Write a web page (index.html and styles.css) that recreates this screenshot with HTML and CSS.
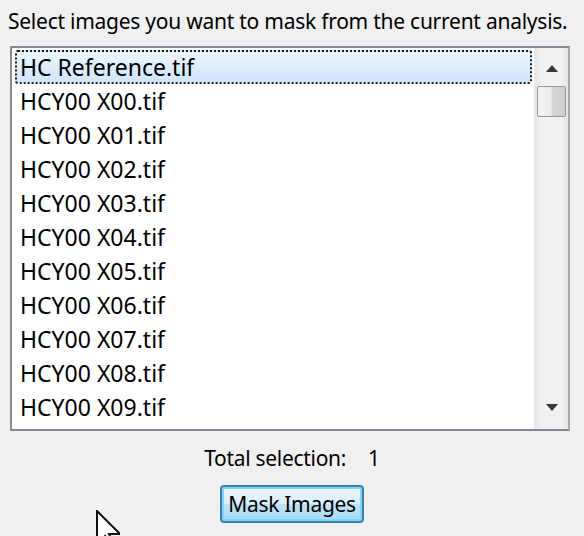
FILE: index.html
```html
<!DOCTYPE html>
<html>
<head>
<meta charset="utf-8">
<link rel="stylesheet" href="styles.css">
</head>
<body>
<div class="dialog">
  <div class="prompt">Select images you want to mask from the current analysis.</div>
  <div class="listbox">
    <div class="items">
      <div class="item selected">HC Reference.tif</div>
      <div class="item">HCY00 X00.tif</div>
      <div class="item">HCY00 X01.tif</div>
      <div class="item">HCY00 X02.tif</div>
      <div class="item">HCY00 X03.tif</div>
      <div class="item">HCY00 X04.tif</div>
      <div class="item">HCY00 X05.tif</div>
      <div class="item">HCY00 X06.tif</div>
      <div class="item">HCY00 X07.tif</div>
      <div class="item">HCY00 X08.tif</div>
      <div class="item">HCY00 X09.tif</div>
    </div>
    <div class="scrollbar">
      <div class="arrow up"><svg width="12" height="7" viewBox="0 0 12 7"><path d="M6 0 L12 7 L0 7 Z" fill="#3a3a3a"/></svg></div>
      <div class="thumb"></div>
      <div class="track"></div>
      <div class="arrow down"><svg width="12" height="7" viewBox="0 0 12 7"><path d="M0 0 L12 0 L6 7 Z" fill="#3a3a3a"/></svg></div>
    </div>
  </div>
  <div class="total">Total selection:<span class="count">1</span></div>
  <div class="actions"><button class="btn">Mask Images</button></div>
</div>
<svg class="cursor" width="24" height="36" viewBox="0 0 24 36"><path d="M1 1 L1 34 L9 26 L14 36 L18 34 L13 24 L24 24 Z" fill="#fff" stroke="#111" stroke-width="2"/></svg>
</body>
</html>
```
FILE: styles.css
```css
html, body {
  margin: 0;
  padding: 0;
  background: #f0f0f0;
  width: 584px;
  height: 536px;
  overflow: hidden;
  position: relative;
}
.dialog {
  font-family: "Noto Sans", sans-serif;
  color: #000;
}
.prompt {
  font-size: 21px;
  letter-spacing: -0.25px;
  padding: 8px 0 0 8px;
  height: 46px;
  box-sizing: border-box;
  line-height: 26px;
  white-space: nowrap;
}
.listbox {
  margin-left: 10px;
  width: 560px;
  height: 385px;
  box-sizing: border-box;
  border: 2px solid #868991;
  border-right-color: #a4a7ad;
  background: #fff;
  display: flex;
}
.items {
  flex: 1;
  padding: 2px 2px 0 3px;
  overflow: hidden;
}
.item {
  height: 34px;
  line-height: 34px;
  font-size: 23px;
  letter-spacing: 0;
  padding-left: 5px;
  box-sizing: border-box;
  white-space: nowrap;
}
.item.selected {
  border: 2px dotted #1a1a1a;
  border-radius: 3px;
  background: linear-gradient(#eef6fe, #cfe4fb);
  line-height: 30px;
  padding-left: 3px;
}
.scrollbar {
  width: 33px;
  display: flex;
  flex-direction: column;
  background: linear-gradient(90deg, #e6e6e6, #f2f2f2 20%, #f2f2f2 80%, #e4e4e4);
  border-left: 1px solid #ececec;
}
.arrow {
  height: 36px;
  display: flex;
  align-items: center;
  justify-content: center;
}
.arrow.up { padding-top: 4px; box-sizing: border-box; height: 36px; }
.arrow.down { height: 40px; padding-bottom: 4px; box-sizing: border-box; }
.thumb {
  margin: 2px 2px 0 2px;
  height: 31px;
  box-sizing: border-box;
  border: 1px solid #979797;
  border-radius: 2px;
  background: linear-gradient(90deg, #f4f4f4, #ececec 45%, #d6d6d6 55%, #cfcfcf);
}
.track { flex: 1; }
.total {
  font-size: 21px;
  letter-spacing: -0.3px;
  text-align: center;
  margin-top: 13px;
  height: 28px;
  line-height: 28px;
}
.count { margin-left: 22px; }
.actions {
  display: flex;
  justify-content: center;
  margin-top: 13px;
}
.btn {
  font-family: "Noto Sans", sans-serif;
  font-size: 21px;
  letter-spacing: -0.3px;
  width: 144px;
  height: 38px;
  border: 2px solid #3c7fb1;
  border-radius: 4px;
  background: linear-gradient(#e8f5fd, #d9effb 50%, #bde4f8 51%, #a7d9f5);
  box-shadow: inset 0 0 0 2px #7fd6fa;
  color: #000;
  padding: 0;
  line-height: 30px;
}
.cursor {
  position: absolute;
  left: 96px;
  top: 510px;
}
```
